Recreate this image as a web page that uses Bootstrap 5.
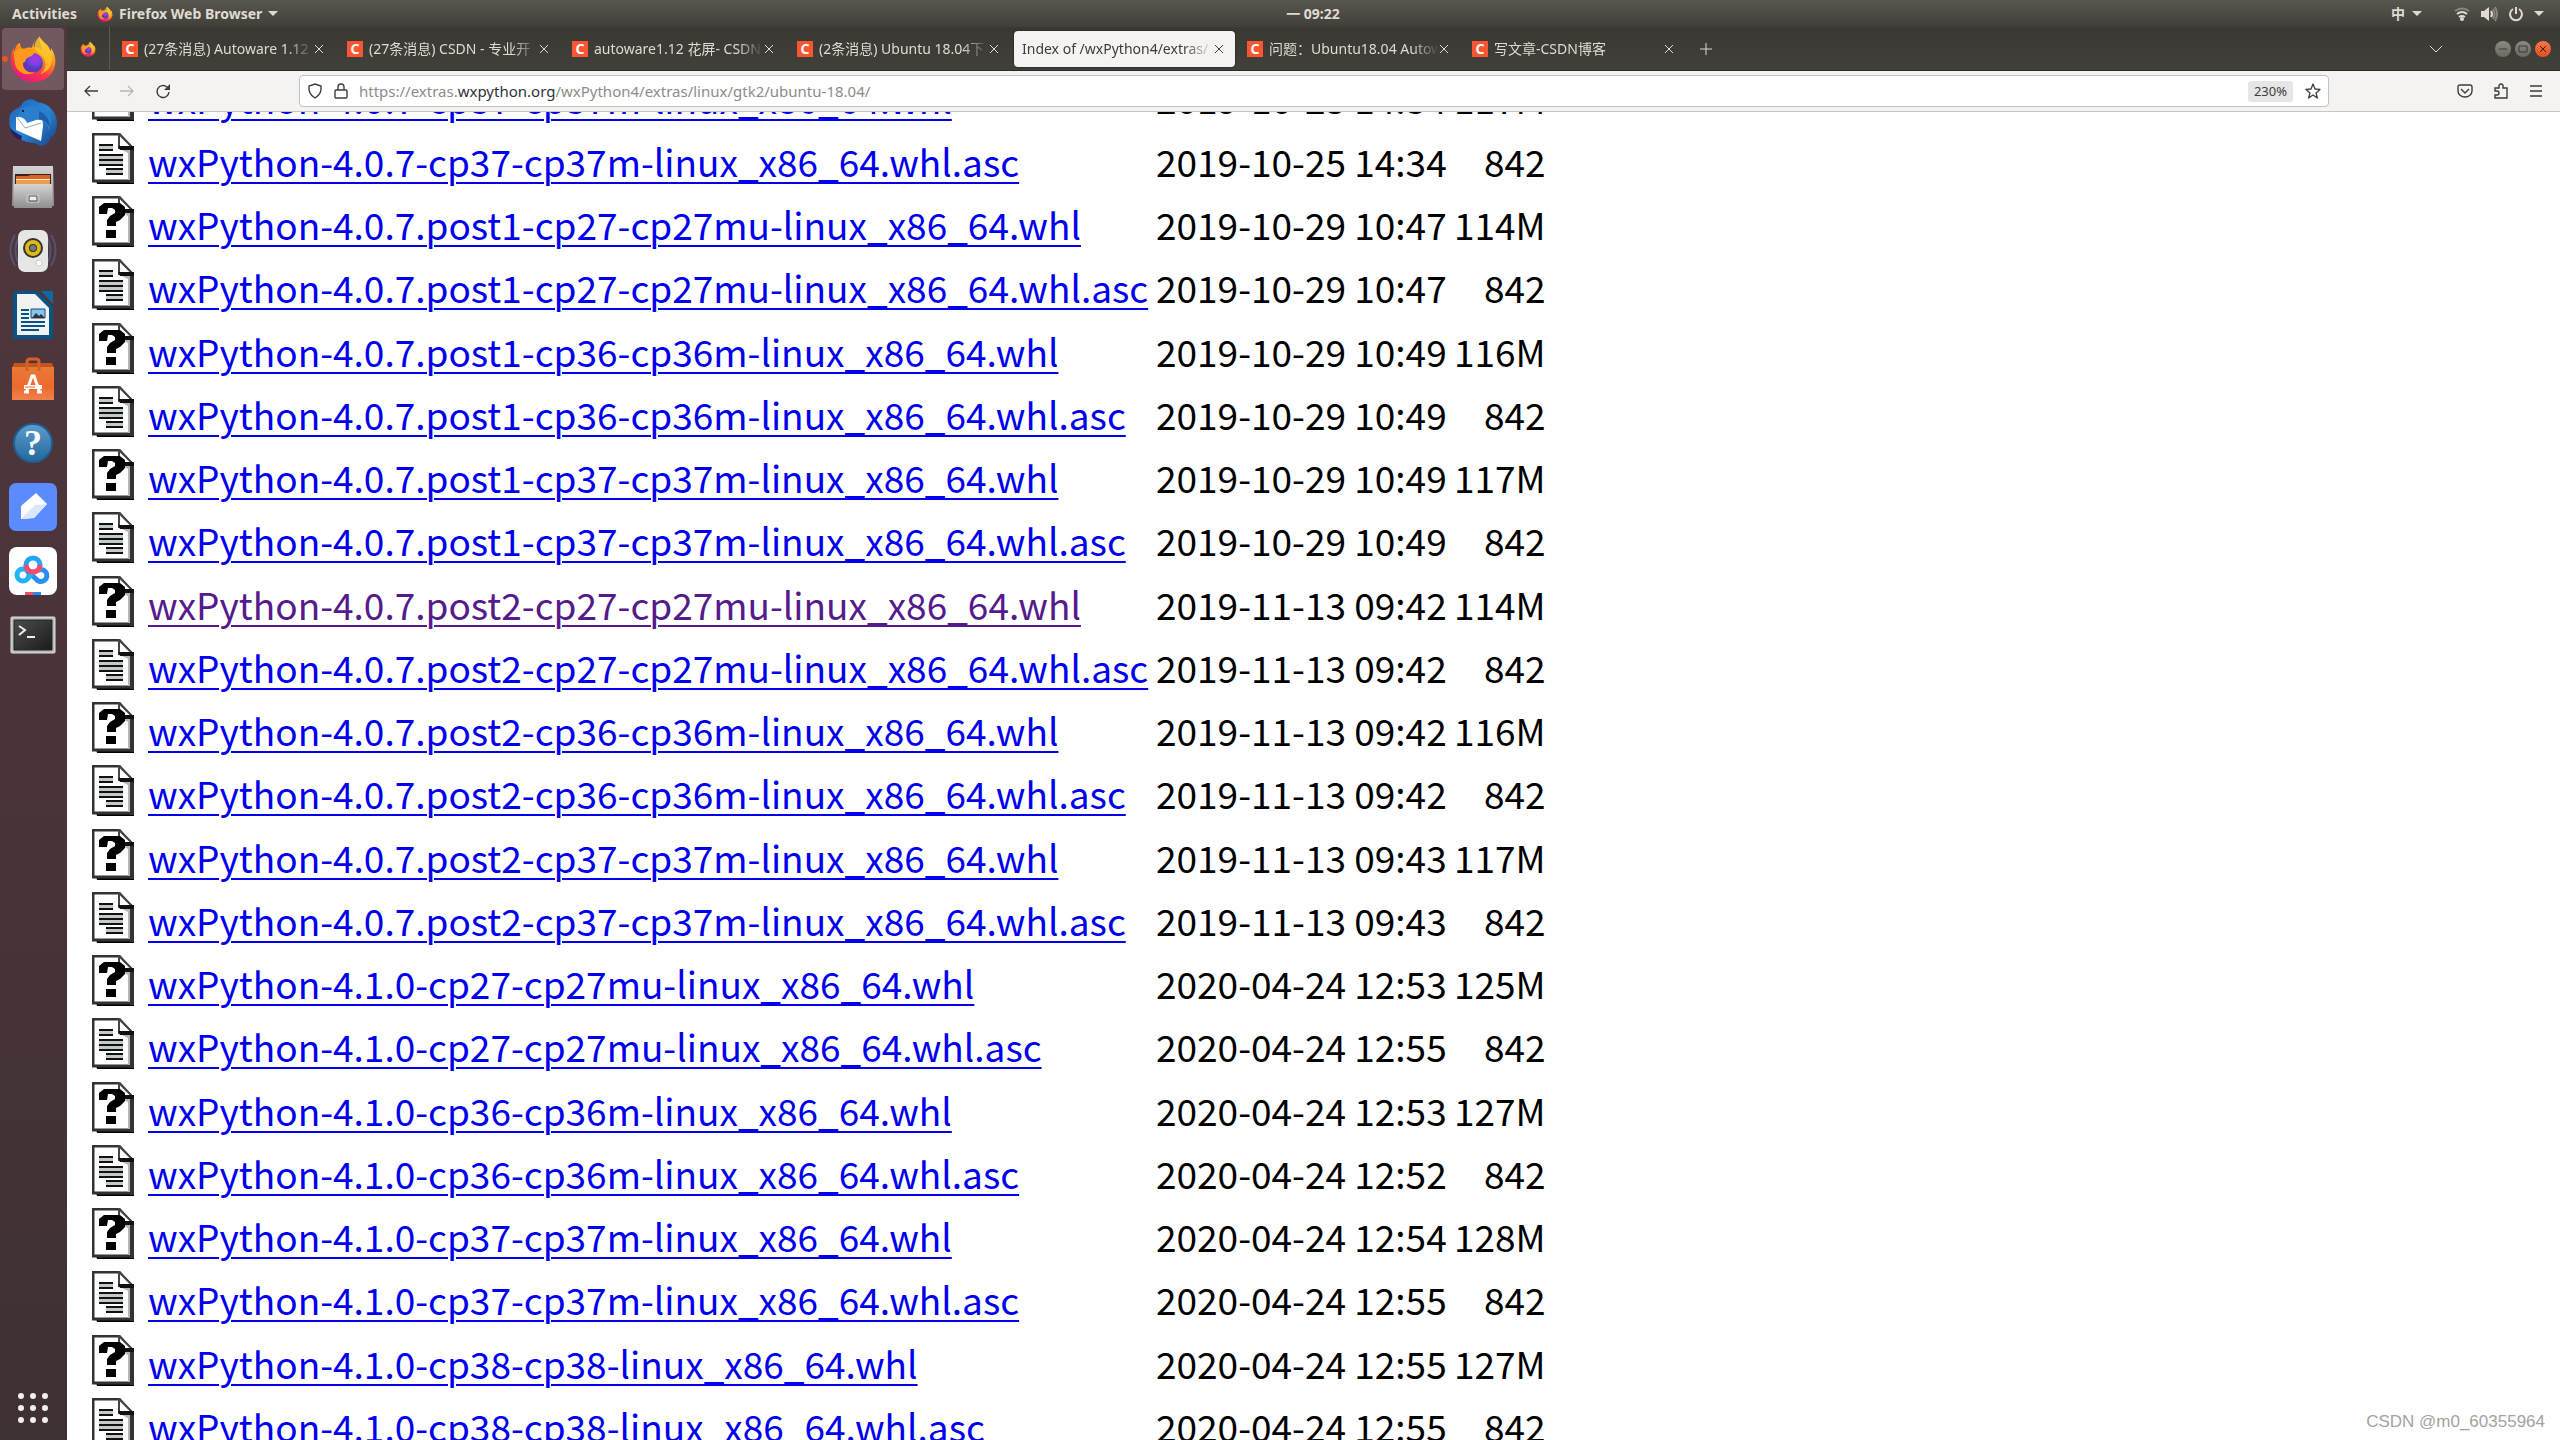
<!DOCTYPE html>
<html lang="en">
<head>
<meta charset="utf-8">
<meta name="viewport" content="width=device-width, initial-scale=1">
<title>Index of /wxPython4/extras/linux/gtk2/ubuntu-18.04</title>
<link href="https://cdn.jsdelivr.net/npm/bootstrap@5.3.0/dist/css/bootstrap.min.css" rel="stylesheet">
<style>
  body { font-family: "Noto Sans", "Noto Sans CJK SC", sans-serif; font-size: 14px; line-height: 20px; color: #3d3d3d; background: #fff; }
  svg { display: block; flex: none; }
  button, .dock-item { background: none; border: 0; padding: 0; color: inherit; }
  .topbar { height: 27px; color: #dfdbd2; background: linear-gradient(#59564e, #413f3a); }
  .topbar button { font-weight: 700; }
  .topbar .side { flex: 1 1 0; }
  .topbar .app-menu { gap: 6px; margin-left: 20px; }
  .topbar .clock { padding-left: 66px; }
  .topbar .input-menu { gap: 7px; margin-right: 32px; }
  .topbar .system-menu { gap: 10px; margin-right: 16px; }
  .caret { width: 0; height: 0; border: 5px solid transparent; border-top-color: #dfdbd2; border-bottom: 0; }
  .dock { width: 67px; background: linear-gradient(#50373d, #4a3439 50%, #3e3133); padding: 1px 0; }
  .dock-item { width: 62px; height: 62px; margin: 0 3px 2px 2px; border-radius: 4px; display: flex; align-items: center; justify-content: center; position: relative; }
  .dock-item.running { background: #73595f; }
  .dock-item.running::before { content: ""; position: absolute; left: 0; top: 28px; width: 6px; height: 6px; border-radius: 50%; background: #e95420; }
  .tabstrip { height: 44px; background: linear-gradient(#3a3833, #42403b); border-bottom: 1px solid #2c2a27; color: #dfdbd2; }
  .pinned { width: 43px; border-right: 1px solid #5c5a55; margin-right: 2px; }
  .tab-item { width: 225px; padding: 4px 2px; min-width: 0; }
  .tab-face { height: 36px; padding: 1px 11px 0 8px; border-radius: 4px; }
  .tab-face.active { background: #f4f3f2; color: #3d3d3d; box-shadow: 0 0 2px #111; }
  .tab-title { flex: 1 1 0; min-width: 0; overflow: hidden; white-space: nowrap; color: inherit; text-decoration: none; -webkit-mask-image: linear-gradient(90deg, #000 84%, transparent); mask-image: linear-gradient(90deg, #000 84%, transparent); }
  .tab-title:hover { color: inherit; }
  .favi { width: 16px; height: 16px; background: #fc5531; color: #fff; font: 700 14px/16px "Noto Sans", sans-serif; text-align: center; margin-right: 6px; flex: none; }
  .win-set { gap: 4px; margin: 0 9px 0 4px; }
  .win-btn { width: 16px; height: 16px; border-radius: 50%; background: linear-gradient(#8b8981, #6b6963); }
  .win-btn.shut { background: linear-gradient(#f3764b, #e0501f); }
  .toolbar { height: 41px; background: #f4f3f2; border-bottom: 1px solid #c8c6c3; }
  .nav-tools { width: 232px; padding-left: 16px; gap: 20px; }
  .urlbar { height: 32px; background: #fff; border: 1px solid #c3c2c0; border-radius: 4px; padding: 0 7px; flex: 1 1 0; }
  .url-text { color: #8c8c8c; flex: 1 1 0; font-size: 15px; }
  .url-text b { color: #2e3436; font-weight: 400; }
  .zoom-level { width: 45px; height: 21px; background: #e6e6e6; border-radius: 3px; font-size: 13px; line-height: 21px; }
  .menu-tools { width: 231px; padding-right: 17px; gap: 20px; }
  .page { overflow: hidden; background: #fff; }
  .listing { margin: -42px 0 0 25px; font: 37px/53px "Noto Sans CJK SC", "Noto Sans", sans-serif; color: #000; border-collapse: collapse; }
  .listing tr { height: 63px; }
  .listing tr:nth-child(4n) { height: 64px; }
  .listing td { padding: 2px 0 0; white-space: nowrap; vertical-align: top; }
  .listing td:first-child { width: 56px; padding-top: 0; }
  .listing td:nth-child(2) { width: 1008px; }
  .listing td:nth-child(3) { width: 298px; }
  .listing td:nth-child(4) { width: 91px; text-align: right; }
  .listing a { color: #0000ee; text-decoration: underline; text-decoration-thickness: 2px; text-underline-offset: 5px; }
  .listing a.seen { color: #551a8b; }
  .watermark { position: absolute; right: 15px; bottom: 8px; font: 17px/20px "Liberation Sans", sans-serif; color: #a3a3a3; }
</style>
<script src="https://cdn.jsdelivr.net/npm/bootstrap@5.3.0/dist/js/bootstrap.bundle.min.js"></script>
</head>
<body class="vh-100 overflow-hidden d-flex flex-column position-relative">

<svg width="0" height="0" class="position-absolute" aria-hidden="true">
  <defs>
    <linearGradient id="flame" x1=".8" y1="0" x2=".3" y2="1"><stop offset="0" stop-color="#fff44f"/><stop offset=".4" stop-color="#ff980e"/><stop offset=".7" stop-color="#ff3647"/><stop offset="1" stop-color="#e31587"/></linearGradient>
    <radialGradient id="globe" cx=".6" cy=".3"><stop offset="0" stop-color="#b833e1"/><stop offset=".6" stop-color="#7543e5"/><stop offset="1" stop-color="#5b3ab8"/></radialGradient>
    <linearGradient id="bird" x1="0" y1="0" x2="1" y2="1"><stop offset="0" stop-color="#1b5fb5"/><stop offset=".5" stop-color="#2c87d6"/><stop offset="1" stop-color="#173f86"/></linearGradient>
    <linearGradient id="metal" x1="0" y1="0" x2="0" y2="1"><stop offset="0" stop-color="#d4d4d4"/><stop offset="1" stop-color="#8f8f8f"/></linearGradient>
    <linearGradient id="bag" x1="0" y1="0" x2="0" y2="1"><stop offset="0" stop-color="#e77a38"/><stop offset=".6" stop-color="#ee6a2c"/><stop offset="1" stop-color="#f0814b"/></linearGradient>
    <linearGradient id="help" x1="0" y1="0" x2="0" y2="1"><stop offset="0" stop-color="#5f9ccc"/><stop offset="1" stop-color="#22689d"/></linearGradient>
    <linearGradient id="screen" x1="0" y1="0" x2="1" y2="1"><stop offset="0" stop-color="#4c4c4c"/><stop offset="1" stop-color="#1c1c1c"/></linearGradient>
  </defs>
  <symbol id="fox" viewBox="0 0 46 48">
    <path fill="url(#flame)" d="M29 1c-4 3-6 7-5 11 3 0 6 1 8 3 0-2-2-5-3-14zM29 1c2 4 6 7 9 10 1 2 2 4 2 6 1-1 1-3 1-4 4 6 5 12 4 17-2 11-11 17-22 17S2 39 1 27C0 21 2 16 4 13c0 1 0 2 1 3 0-4 2-7 5-8 0 3 1 5 3 6 3-1 6-2 9-1 1-5 3-9 7-12z"/>
    <circle cx="23" cy="28" r="10" fill="url(#globe)"/>
    <path fill="#ff9a1f" d="M4 17c4-5 11-4 14-1 2 1 5 1 6 2-1 3-5 4-7 5-2 2-1 4-4 5-1 6 5 11 12 9-8 5-18 1-20-8-1-4-1-8-1-12z"/>
    <path fill="#ffc62e" d="M29 2c5 6 13 10 13 22 0 8-6 14-12 15 6-4 7-11 3-17-2-3-7-5-8-9s1-8 4-11z" opacity=".8"/>
  </symbol>
  <symbol id="cross" viewBox="0 0 10 10"><path d="M1 1l8 8M9 1L1 9" stroke="currentColor" fill="none"/></symbol>
  <symbol id="sheet" viewBox="0 0 42 51">
    <path fill="#000" d="M4 47h38v4H5z"/><path fill="#333" d="M38 16h4v34h-4z"/>
    <path fill="#fff" stroke="#333" stroke-width="3" d="M1 1h26l12 13v34H1z"/>
    <path fill="#b5b5b5" d="M30 17h8v30h-2V20z"/>
    <path fill="#fff" stroke="#444" stroke-width="2" d="M27 1v14h14z"/><path fill="#111" d="M26 13h16v4H28z"/>
  </symbol>
  <symbol id="doc" viewBox="0 0 42 51">
    <use href="#sheet"/>
    <path fill="#c2cbc6" d="M7 12h14v6H7zM7 22h24v10H7zM14 36h17v5H14z"/>
    <path stroke="#111" stroke-width="2" d="M7 12h14M7 17h14M7 22h24M7 27h24M7 32h24M14 36h17M14 41h17"/>
  </symbol>
  <symbol id="unk" viewBox="0 0 42 51">
    <use href="#sheet"/>
    <path fill="#000" d="M12 7h16l5 4v8l-5 5-4 2v4h-9v-6l3-4 5-3v-3l-3-2h-4l-1 6H7v-7zM14 34h10v8H14z"/>
  </symbol>
</svg>

<header class="topbar flex-shrink-0 d-flex align-items-center">
  <div class="side d-flex align-items-center">
    <button class="ms-2 ps-1">Activities</button>
    <button class="app-menu d-flex align-items-center"><svg width="16" height="16"><use href="#fox"/></svg><span>Firefox Web Browser</span><span class="caret"></span></button>
  </div>
  <button class="clock">一 09:22</button>
  <div class="side d-flex align-items-center justify-content-end">
    <button class="input-menu d-flex align-items-center"><span>中</span><span class="caret"></span></button>
    <button class="system-menu d-flex align-items-center" aria-label="System">
      <svg width="16" height="16" viewBox="0 0 16 16" fill="none" stroke="#dfdbd2" stroke-width="2"><path d="M1 5q7-5 14 0" opacity=".4"/><path d="M3 8q5-4 10 0M5 11q3-2 6 0"/><circle cx="8" cy="13" r="1"/></svg>
      <svg width="18" height="16" viewBox="0 0 18 16" fill="none" stroke="#dfdbd2" stroke-width="2"><path fill="#dfdbd2" stroke="none" d="M1 5h3l5-4v14l-5-4H1z"/><path d="M11 5q2 3 0 6"/><path d="M13 3q3 5 0 10M15 1q4 7 0 14" opacity=".4"/></svg>
      <svg width="16" height="16" viewBox="0 0 16 16" fill="none" stroke="#dfdbd2" stroke-width="2"><path d="M5 3a6 6 0 1 0 6 0M8 1v7"/></svg>
      <span class="caret"></span>
    </button>
  </div>
</header>

<div class="d-flex flex-grow-1 overflow-hidden">
  <nav class="dock flex-shrink-0 d-flex flex-column" aria-label="Dock">
    <button class="dock-item running" aria-label="Firefox"><svg width="46" height="48"><use href="#fox"/></svg></button>
    <button class="dock-item" aria-label="Thunderbird"><svg width="48" height="48" viewBox="0 0 48 48"><path fill="url(#bird)" d="M18 1c4-2 8 0 10 2 10 1 19 8 20 20 0 6-1 10-4 15l-2-1c0 4-3 7-6 9l-5 1-5-3C10 44-3 32 1 16 4 10 10 9 12 7c1-3 3-5 6-6z"/><path fill="#fff" d="M7 18l26-3 1 12-2 15L7 31z"/><path fill="#2a80cc" d="M10 14c3-6 8-8 14-6 5-1 9-1 12 2 7 6 8 14 4 22-1-7-5-12-13-11l-9 3c-2-5-5-6-10-6z"/><path fill="#1d5fae" d="M30 12c7 3 11 9 12 18-3-5-6-9-12-10z"/><path fill="none" stroke="#aaa" d="M8 18l8 11 16-5"/><path fill="#281e66" d="M1 29c3 3 6 5 12 8l-1 4C6 39 2 35 1 29z"/><circle cx="14" cy="12" r="1"/></svg></button>
    <button class="dock-item" aria-label="Files"><svg width="44" height="44" viewBox="0 0 44 44"><path fill="url(#metal)" d="M2 1h40l1 40H1z"/><path fill="#3a211c" d="M4 9h36v11H4z"/><path fill="#d86425" d="M5 11h12l2-1h20v9H5z"/><path fill="#fff0d0" d="M5 14h34v1H5z"/><path fill="#f09a50" d="M5 15h34v4H5z"/><path fill="url(#metal)" d="M3 19h38v24H3z"/><rect x="16" y="29" width="12" height="8" rx="2" fill="#eee" stroke="#bbb" stroke-width="2"/><path fill="none" stroke="#444" d="M18 31h8v5h-8z"/></svg></button>
    <button class="dock-item" aria-label="Rhythmbox"><svg width="48" height="44" viewBox="0 0 48 44"><path fill="none" stroke="#55618c" stroke-width="2" opacity=".7" d="M6 6q-9 15 0 31M42 6q9 15 0 31M9 10q-5 11 0 23M39 10q5 11 0 23"/><rect x="9" y="1" width="30" height="42" rx="7" fill="#e6e6e4"/><circle cx="24" cy="19" r="10" fill="#333"/><circle cx="24" cy="19" r="6" fill="none" stroke="#dcb918" stroke-width="4"/><circle cx="24" cy="19" r="3" fill="#777"/><circle cx="30" cy="34" r="3" fill="#fff" stroke="#ccc"/></svg></button>
    <button class="dock-item" aria-label="LibreOffice Writer"><svg width="40" height="48" viewBox="0 0 40 48"><path fill="#075484" d="M2 0h22l16 16v32H0V2z"/><path fill="#f2f2f2" d="M4 3h18l14 14v27H4z"/><path fill="#0b69a3" d="M28 0h12v13z"/><path stroke="#075484" stroke-width="2" d="M8 19h8M8 23h8M8 27h8M8 31h24M8 35h24M8 39h18"/><path fill="#89c4ee" stroke="#075484" d="M18 18h14v9H18z"/><path fill="#333" d="M19 27l4-5 3 3 2-2 4 4z"/></svg></button>
    <button class="dock-item" aria-label="Ubuntu Software"><svg width="42" height="44" viewBox="0 0 42 44"><path fill="#c6531d" d="M2 6h38l2 5H0z"/><path fill="url(#bag)" d="M0 10h42v33H0z"/><path fill="none" stroke="#d86028" stroke-width="3" d="M15 14V5q0-3 3-3h6q3 0 3 3v9"/><path fill="none" stroke="#fff" stroke-width="3" d="M14 36l6-17h2l6 17M12 35h5M25 35h5"/><path stroke="#fff" stroke-width="4" d="M12 30h18"/><path stroke="#ed6b2d" d="M13 30h10"/></svg></button>
    <button class="dock-item" aria-label="Help"><svg width="40" height="40" viewBox="0 0 40 40"><circle cx="20" cy="20" r="19" fill="url(#help)" stroke="#1f5f92" stroke-width="2"/><text x="20" y="32" fill="#fff" text-anchor="middle" font-family="Liberation Serif, serif" font-weight="700" font-size="36">?</text></svg></button>
    <button class="dock-item" aria-label="Notes"><svg width="48" height="48" viewBox="0 0 48 48"><rect width="48" height="48" rx="7" fill="#5a8cff"/><path fill="#fff" d="M12 36V23l15-13 11 11-13 14z"/><path fill="#dbe6ff" d="M12 36l14-14 12-1-13 14z"/></svg></button>
    <button class="dock-item" aria-label="Baidu Netdisk"><svg width="48" height="48" viewBox="0 0 48 48"><rect width="48" height="48" rx="8" fill="#fff"/><g fill="none" stroke-width="5"><circle cx="14" cy="28" r="6" stroke="#20b4f8"/><path stroke="#2a8cf5" d="M18 24l9 8a6 6 0 1 0 1-8"/><path stroke="#20b4f8" d="M18 32l5-5"/><circle cx="24" cy="18" r="7" stroke="#24a4f5"/><path stroke="#fb4b6d" d="M17 18a7 7 0 0 0 14 0"/></g><path fill="#fb4b6d" d="M16 45h8v3h-8z"/><path fill="#1f8cff" d="M24 45h8v3h-8z"/></svg></button>
    <button class="dock-item" aria-label="Terminal"><svg width="46" height="38" viewBox="0 0 46 38"><rect x="1" y="1" width="44" height="36" rx="1" fill="#bcbcb8" stroke="#ddd"/><path fill="url(#screen)" stroke="#222" d="M4 4h38v30H4z"/><path fill="none" stroke="#eee" stroke-width="2" d="M9 10l6 4-6 5M17 21h8"/></svg></button>
    <button class="dock-item mt-auto mb-0" aria-label="Show Applications"><svg width="32" height="32" viewBox="0 0 32 32" fill="#f2f0ee"><g id="dots"><circle cx="4" cy="4" r="3"/><circle cx="16" cy="4" r="3"/><circle cx="28" cy="4" r="3"/></g><use href="#dots" y="12"/><use href="#dots" y="24"/></svg></button>
  </nav>

  <div class="flex-grow-1 d-flex flex-column overflow-hidden">
    <div class="tabstrip flex-shrink-0 d-flex align-items-center">
      <button class="pinned h-100 d-flex align-items-center justify-content-center" aria-label="Firefox View"><svg width="16" height="16"><use href="#fox"/></svg></button>
      <div class="tab-item"><div class="tab-face d-flex align-items-center"><span class="favi">C</span><a class="tab-title" href="#">(27条消息) Autoware 1.12</a><button aria-label="Close tab"><svg width="10" height="10"><use href="#cross"/></svg></button></div></div>
      <div class="tab-item"><div class="tab-face d-flex align-items-center"><span class="favi">C</span><a class="tab-title" href="#">(27条消息) CSDN - 专业开</a><button aria-label="Close tab"><svg width="10" height="10"><use href="#cross"/></svg></button></div></div>
      <div class="tab-item"><div class="tab-face d-flex align-items-center"><span class="favi">C</span><a class="tab-title" href="#">autoware1.12 花屏- CSDN</a><button aria-label="Close tab"><svg width="10" height="10"><use href="#cross"/></svg></button></div></div>
      <div class="tab-item"><div class="tab-face d-flex align-items-center"><span class="favi">C</span><a class="tab-title" href="#">(2条消息) Ubuntu 18.04下</a><button aria-label="Close tab"><svg width="10" height="10"><use href="#cross"/></svg></button></div></div>
      <div class="tab-item"><div class="tab-face active d-flex align-items-center"><a class="tab-title" href="#">Index of /wxPython4/extras/</a><button aria-label="Close tab"><svg width="10" height="10"><use href="#cross"/></svg></button></div></div>
      <div class="tab-item"><div class="tab-face d-flex align-items-center"><span class="favi">C</span><a class="tab-title" href="#">问题：Ubuntu18.04 Autow</a><button aria-label="Close tab"><svg width="10" height="10"><use href="#cross"/></svg></button></div></div>
      <div class="tab-item"><div class="tab-face d-flex align-items-center"><span class="favi">C</span><a class="tab-title" href="#">写文章-CSDN博客</a><button aria-label="Close tab"><svg width="10" height="10"><use href="#cross"/></svg></button></div></div>
      <button class="ms-2 ps-1" aria-label="New tab"><svg width="14" height="14" viewBox="0 0 14 14"><path d="M7 1v12M1 7h12" stroke="currentColor"/></svg></button>
      <button class="ms-auto me-5" aria-label="List all tabs"><svg width="14" height="14" viewBox="0 0 14 14"><path d="M1 4l6 6 6-6" fill="none" stroke="currentColor"/></svg></button>
      <div class="win-set d-flex">
        <button class="win-btn" aria-label="Minimize"><svg width="16" height="16"><path d="M4 8h8" stroke="#3a3833"/></svg></button>
        <button class="win-btn" aria-label="Maximize"><svg width="16" height="16"><path d="M4 5h8v6H4z" fill="none" stroke="#3a3833"/></svg></button>
        <button class="win-btn shut" aria-label="Close"><svg width="16" height="16"><path d="M5 5l6 6M11 5l-6 6" stroke="#3a2018"/></svg></button>
      </div>
    </div>

    <div class="toolbar flex-shrink-0 d-flex align-items-center">
      <div class="nav-tools d-flex align-items-center">
        <button aria-label="Back"><svg width="16" height="16" viewBox="0 0 16 16" fill="none" stroke="#3d3d3d" stroke-width="1.3"><path d="M15 8H2M7 3L2 8l5 5"/></svg></button>
        <button aria-label="Forward"><svg width="16" height="16" viewBox="0 0 16 16" fill="none" stroke="#b5b5b5" stroke-width="1.3"><path d="M1 8h13M9 3l5 5-5 5"/></svg></button>
        <button aria-label="Reload"><svg width="16" height="16" viewBox="0 0 16 16" fill="none" stroke="#3d3d3d" stroke-width="1.4"><path d="M14 9a6 6 0 1 1-2-5l2 2"/><path fill="#3d3d3d" stroke="none" d="M15 1v6H9z"/></svg></button>
      </div>
      <div class="urlbar d-flex align-items-center">
        <svg width="16" height="16" viewBox="0 0 16 16" fill="none" stroke="#3d3d3d" stroke-width="1.4"><path d="M8 1l6 2q1 8-6 12Q1 11 2 3z"/></svg>
        <svg class="ms-2 me-2" width="20" height="16" viewBox="0 0 16 16" fill="none" stroke="#3d3d3d" stroke-width="1.4"><rect x="2" y="7" width="12" height="8" rx="1"/><path d="M5 7V4a3 3 0 0 1 6 0v3"/></svg>
        <a class="url-text text-decoration-none" href="#">https://extras.<b>wxpython.org</b>/wxPython4/extras/linux/gtk2/ubuntu-18.04/</a>
        <button class="zoom-level">230%</button>
        <button class="ms-2 ps-1" aria-label="Bookmark"><svg width="16" height="16" viewBox="0 0 16 16" fill="none" stroke="#3d3d3d" stroke-width="1.3" stroke-linejoin="round"><path d="M8 1l2 5 5 .4-4 3.5 1.400 5.100L8 12l-4.400 3L5 9.900 1 6.400 6 6z"/></svg></button>
      </div>
      <div class="menu-tools d-flex align-items-center justify-content-end">
        <button aria-label="Save to Pocket"><svg width="16" height="16" viewBox="0 0 16 16" fill="none" stroke="#3d3d3d" stroke-width="1.4"><path d="M3 2h10q2 0 2 2v4a7 6 0 0 1-14 0V4q0-2 2-2zM4 6l4 4 4-4"/></svg></button>
        <button aria-label="Extensions"><svg width="16" height="16" viewBox="0 0 16 16" fill="none" stroke="#3d3d3d" stroke-width="1.4"><path d="M2 8V5h4V3a2 2 0 0 1 4 0v2h4v10H2v-3h2a2 2 0 0 0 0-4z"/></svg></button>
        <button aria-label="Menu"><svg width="14" height="16" viewBox="0 0 14 16"><path d="M1 3h12M1 8h12M1 13h12" stroke="#3d3d3d" stroke-width="1.4"/></svg></button>
      </div>
    </div>

    <main class="page flex-grow-1">
      <table class="listing"><tbody>
        <tr><td><svg width="42" height="51"><use href="#unk"/></svg></td><td><a href="#">wxPython-4.0.7-cp37-cp37m-linux_x86_64.whl</a></td><td>2019-10-25 14:34</td><td>117M</td></tr>
        <tr><td><svg width="42" height="51"><use href="#doc"/></svg></td><td><a href="#">wxPython-4.0.7-cp37-cp37m-linux_x86_64.whl.asc</a></td><td>2019-10-25 14:34</td><td>842</td></tr>
        <tr><td><svg width="42" height="51"><use href="#unk"/></svg></td><td><a href="#">wxPython-4.0.7.post1-cp27-cp27mu-linux_x86_64.whl</a></td><td>2019-10-29 10:47</td><td>114M</td></tr>
        <tr><td><svg width="42" height="51"><use href="#doc"/></svg></td><td><a href="#">wxPython-4.0.7.post1-cp27-cp27mu-linux_x86_64.whl.asc</a></td><td>2019-10-29 10:47</td><td>842</td></tr>
        <tr><td><svg width="42" height="51"><use href="#unk"/></svg></td><td><a href="#">wxPython-4.0.7.post1-cp36-cp36m-linux_x86_64.whl</a></td><td>2019-10-29 10:49</td><td>116M</td></tr>
        <tr><td><svg width="42" height="51"><use href="#doc"/></svg></td><td><a href="#">wxPython-4.0.7.post1-cp36-cp36m-linux_x86_64.whl.asc</a></td><td>2019-10-29 10:49</td><td>842</td></tr>
        <tr><td><svg width="42" height="51"><use href="#unk"/></svg></td><td><a href="#">wxPython-4.0.7.post1-cp37-cp37m-linux_x86_64.whl</a></td><td>2019-10-29 10:49</td><td>117M</td></tr>
        <tr><td><svg width="42" height="51"><use href="#doc"/></svg></td><td><a href="#">wxPython-4.0.7.post1-cp37-cp37m-linux_x86_64.whl.asc</a></td><td>2019-10-29 10:49</td><td>842</td></tr>
        <tr><td><svg width="42" height="51"><use href="#unk"/></svg></td><td><a class="seen" href="#">wxPython-4.0.7.post2-cp27-cp27mu-linux_x86_64.whl</a></td><td>2019-11-13 09:42</td><td>114M</td></tr>
        <tr><td><svg width="42" height="51"><use href="#doc"/></svg></td><td><a href="#">wxPython-4.0.7.post2-cp27-cp27mu-linux_x86_64.whl.asc</a></td><td>2019-11-13 09:42</td><td>842</td></tr>
        <tr><td><svg width="42" height="51"><use href="#unk"/></svg></td><td><a href="#">wxPython-4.0.7.post2-cp36-cp36m-linux_x86_64.whl</a></td><td>2019-11-13 09:42</td><td>116M</td></tr>
        <tr><td><svg width="42" height="51"><use href="#doc"/></svg></td><td><a href="#">wxPython-4.0.7.post2-cp36-cp36m-linux_x86_64.whl.asc</a></td><td>2019-11-13 09:42</td><td>842</td></tr>
        <tr><td><svg width="42" height="51"><use href="#unk"/></svg></td><td><a href="#">wxPython-4.0.7.post2-cp37-cp37m-linux_x86_64.whl</a></td><td>2019-11-13 09:43</td><td>117M</td></tr>
        <tr><td><svg width="42" height="51"><use href="#doc"/></svg></td><td><a href="#">wxPython-4.0.7.post2-cp37-cp37m-linux_x86_64.whl.asc</a></td><td>2019-11-13 09:43</td><td>842</td></tr>
        <tr><td><svg width="42" height="51"><use href="#unk"/></svg></td><td><a href="#">wxPython-4.1.0-cp27-cp27mu-linux_x86_64.whl</a></td><td>2020-04-24 12:53</td><td>125M</td></tr>
        <tr><td><svg width="42" height="51"><use href="#doc"/></svg></td><td><a href="#">wxPython-4.1.0-cp27-cp27mu-linux_x86_64.whl.asc</a></td><td>2020-04-24 12:55</td><td>842</td></tr>
        <tr><td><svg width="42" height="51"><use href="#unk"/></svg></td><td><a href="#">wxPython-4.1.0-cp36-cp36m-linux_x86_64.whl</a></td><td>2020-04-24 12:53</td><td>127M</td></tr>
        <tr><td><svg width="42" height="51"><use href="#doc"/></svg></td><td><a href="#">wxPython-4.1.0-cp36-cp36m-linux_x86_64.whl.asc</a></td><td>2020-04-24 12:52</td><td>842</td></tr>
        <tr><td><svg width="42" height="51"><use href="#unk"/></svg></td><td><a href="#">wxPython-4.1.0-cp37-cp37m-linux_x86_64.whl</a></td><td>2020-04-24 12:54</td><td>128M</td></tr>
        <tr><td><svg width="42" height="51"><use href="#doc"/></svg></td><td><a href="#">wxPython-4.1.0-cp37-cp37m-linux_x86_64.whl.asc</a></td><td>2020-04-24 12:55</td><td>842</td></tr>
        <tr><td><svg width="42" height="51"><use href="#unk"/></svg></td><td><a href="#">wxPython-4.1.0-cp38-cp38-linux_x86_64.whl</a></td><td>2020-04-24 12:55</td><td>127M</td></tr>
        <tr><td><svg width="42" height="51"><use href="#doc"/></svg></td><td><a href="#">wxPython-4.1.0-cp38-cp38-linux_x86_64.whl.asc</a></td><td>2020-04-24 12:55</td><td>842</td></tr>
      </tbody></table>
    </main>
  </div>
</div>
<div class="watermark">CSDN @m0_60355964</div>
</body>
</html>
